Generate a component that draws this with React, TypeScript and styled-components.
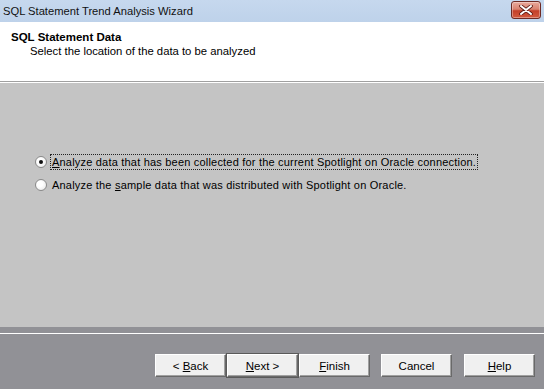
import styled, { createGlobalStyle } from 'styled-components'

const GlobalStyle = createGlobalStyle`
  html, body {
    margin: 0;
    padding: 0;
    width: 544px;
    height: 389px;
    overflow: hidden;
    background: #919196;
  }
`

const Window = styled.div`
  display: flex;
  flex-direction: column;
  width: 544px;
  height: 389px;
  font-family: 'Liberation Sans', Arial, sans-serif;
  color: #000;
`

const TitleBar = styled.div`
  display: flex;
  align-items: center;
  justify-content: space-between;
  height: 22px;
  padding: 0 3px 0 3px;
  box-sizing: border-box;
  background: linear-gradient(#c6d8ee, #bed2ea);
  font-size: 11.2px;
  color: #111;
`

const CloseButton = styled.div`
  display: flex;
  align-items: center;
  justify-content: center;
  width: 30px;
  height: 18px;
  margin-top: -3px;
  box-sizing: border-box;
  border: 1px solid #6e2a24;
  border-radius: 3px;
  background: linear-gradient(#e9a99c 0%, #d9826f 45%, #c4402a 55%, #d25a3f 100%);
  box-shadow: inset 0 0 0 1px rgba(255, 255, 255, 0.35);
`

const Header = styled.div`
  display: flex;
  flex-direction: column;
  height: 60px;
  padding: 9px 0 0 11px;
  box-sizing: border-box;
  background: #fff;
  border-bottom: 1px solid #a0a0a0;
`

const HeaderTitle = styled.div`
  font-size: 11.5px;
  font-weight: bold;
`

const HeaderSubtitle = styled.div`
  font-size: 11.3px;
  margin: 2px 0 0 19px;
`

const Panel = styled.div`
  display: flex;
  flex-direction: column;
  gap: 6px;
  height: 245px;
  padding: 70px 0 0 35px;
  box-sizing: border-box;
  background: #c4c4c4;
  border-top: 1px solid #fff;
`

const Option = styled.label`
  display: flex;
  align-items: center;
  gap: 3px;
  font-size: 11px;
  letter-spacing: 0.2px;
  height: 17px;
`

const RadioCircle = styled.span<{ $checked?: boolean }>`
  display: flex;
  align-items: center;
  justify-content: center;
  width: 12px;
  height: 12px;
  box-sizing: border-box;
  border-radius: 50%;
  border: 1px solid #8a8a8a;
  background: radial-gradient(circle at 40% 40%, #ffffff 30%, #e4e4e4 100%);

  &::after {
    content: '';
    display: ${(p) => (p.$checked ? 'block' : 'none')};
    width: 4px;
    height: 4px;
    border-radius: 50%;
    background: #111;
  }
`

const OptionText = styled.span<{ $focused?: boolean }>`
  padding: 1px 1px;
  border: 1px dotted ${(p) => (p.$focused ? '#222' : 'transparent')};
`

const Footer = styled.div`
  display: flex;
  flex-direction: column;
  flex: 1;
  background: #919196;
`

const Etch = styled.div`
  margin-top: 6px;
  height: 1px;
  background: #fff;
`

const ButtonRow = styled.div`
  display: flex;
  padding: 20px 0 0 155px;
`

const Button = styled.div<{ $default?: boolean; $gap?: number }>`
  display: flex;
  align-items: center;
  justify-content: center;
  width: 71px;
  height: 23px;
  margin-right: ${(p) => p.$gap ?? 1}px;
  box-sizing: border-box;
  background: #f0f0f0;
  font-size: 11.5px;
  border-top: 1px solid #ffffff;
  border-left: 1px solid #ffffff;
  border-right: 1px solid #696969;
  border-bottom: 1px solid #696969;
  box-shadow: ${(p) =>
    p.$default ? '0 0 0 1px #5a5a5a, inset -1px -1px 0 #a0a0a0' : 'inset -1px -1px 0 #a0a0a0'};
`

const U = styled.span`
  text-decoration: underline;
`

const CloseIcon = () => (
  <svg width="14" height="10" viewBox="0 0 14 10">
    <path d="M2 1 L12 9 M12 1 L2 9" stroke="#5a1a14" strokeWidth="3.6" strokeLinecap="round" />
    <path d="M2 1 L12 9 M12 1 L2 9" stroke="#fff" strokeWidth="2" strokeLinecap="round" />
  </svg>
)

const App = () => (
  <>
    <GlobalStyle />
    <Window>
      <TitleBar>
        <span>SQL Statement Trend Analysis Wizard</span>
        <CloseButton>
          <CloseIcon />
        </CloseButton>
      </TitleBar>
      <Header>
        <HeaderTitle>SQL Statement Data</HeaderTitle>
        <HeaderSubtitle>Select the location of the data to be analyzed</HeaderSubtitle>
      </Header>
      <Panel>
        <Option>
          <RadioCircle $checked />
          <OptionText $focused>
            <U>A</U>nalyze data that has been collected for the current Spotlight on Oracle connection.
          </OptionText>
        </Option>
        <Option>
          <RadioCircle />
          <OptionText>
            Analyze the <U>s</U>ample data that was distributed with Spotlight on Oracle.
          </OptionText>
        </Option>
      </Panel>
      <Footer>
        <Etch />
        <ButtonRow>
          <Button>
            &lt;&nbsp;<U>B</U>ack
          </Button>
          <Button $default>
            <U>N</U>ext &gt;
          </Button>
          <Button $gap={11}>
            <U>F</U>inish
          </Button>
          <Button $gap={12}>Cancel</Button>
          <Button>
            <U>H</U>elp
          </Button>
        </ButtonRow>
      </Footer>
    </Window>
  </>
)

export default App
